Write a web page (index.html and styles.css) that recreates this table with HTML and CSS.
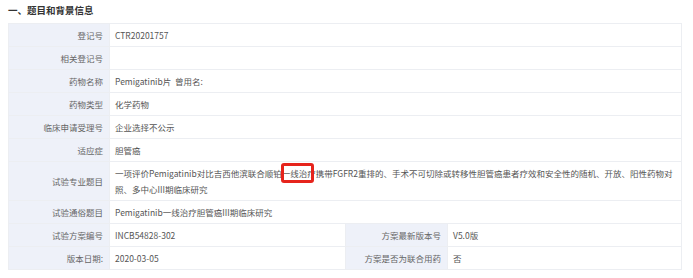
FILE: index.html
```html
<!DOCTYPE html>
<html lang="zh-CN">
<head>
<meta charset="utf-8">
<title>题目和背景信息</title>
<link rel="stylesheet" href="styles.css">
</head>
<body>
<section class="panel">
  <h2 class="title">一、题目和背景信息</h2>
  <table class="info">
    <colgroup>
      <col class="c-label">
      <col class="c-value">
      <col class="c-label2">
      <col class="c-value2">
    </colgroup>
    <tbody>
      <tr><th>登记号</th><td colspan="3">CTR20201757</td></tr>
      <tr><th>相关登记号</th><td colspan="3"></td></tr>
      <tr><th>药物名称</th><td colspan="3">Pemigatinib片&nbsp;&nbsp;曾用名:</td></tr>
      <tr><th>药物类型</th><td colspan="3">化学药物</td></tr>
      <tr><th>临床申请受理号</th><td colspan="3">企业选择不公示</td></tr>
      <tr><th>适应症</th><td colspan="3">胆管癌</td></tr>
      <tr><th>试验专业题目</th><td colspan="3" class="long">一项评价Pemigatinib对比吉西他滨联合顺铂<span class="hl">一线治疗</span>携带FGFR2重排的、手术不可切除或转移性胆管癌患者疗效和安全性的随机、开放、阳性药物对照、多中心III期临床研究</td></tr>
      <tr><th>试验通俗题目</th><td colspan="3">Pemigatinib一线治疗胆管癌III期临床研究</td></tr>
      <tr><th>试验方案编号</th><td>INCB54828-302</td><th>方案最新版本号</th><td>V5.0版</td></tr>
      <tr><th>版本日期:</th><td>2020-03-05</td><th>方案是否为联合用药</th><td>否</td></tr>
    </tbody>
  </table>
</section>
</body>
</html>
```
FILE: styles.css
```css
html, body {
  margin: 0;
  padding: 0;
  background: #ffffff;
}
body {
  font-family: "Noto Sans CJK SC", "Noto Sans", sans-serif;
  color: #555555;
}
.panel {
  padding: 0 8px;
}
.title {
  margin: 0 0 6px 0;
  padding-top: 3px;
  font-size: 9.5px;
  line-height: 14px;
  font-weight: 700;
  color: #333333;
}
.info {
  width: 673px;
  border-collapse: collapse;
  table-layout: fixed;
  font-size: 8.5px;
  line-height: 16px;
}
.c-label { width: 101px; }
.c-value { width: 236px; }
.c-label2 { width: 102px; }
.c-value2 { width: 234px; }
.info th,
.info td {
  border: 1px solid #eceef2;
  padding: 3px 5px;
  height: 16px;
  vertical-align: middle;
}
.info th {
  background: #eef1f9;
  font-weight: 400;
  text-align: right;
  color: #666666;
  padding-right: 6px;
}
.info td {
  text-align: left;
  color: #555555;
}
.info td.long {
  padding-right: 4px;
}
.hl {
  position: relative;
}
.hl::after {
  content: "";
  position: absolute;
  left: -1px;
  right: 2px;
  top: -4px;
  bottom: -4px;
  border: 3px solid #e6241c;
  border-radius: 3px;
}
```
